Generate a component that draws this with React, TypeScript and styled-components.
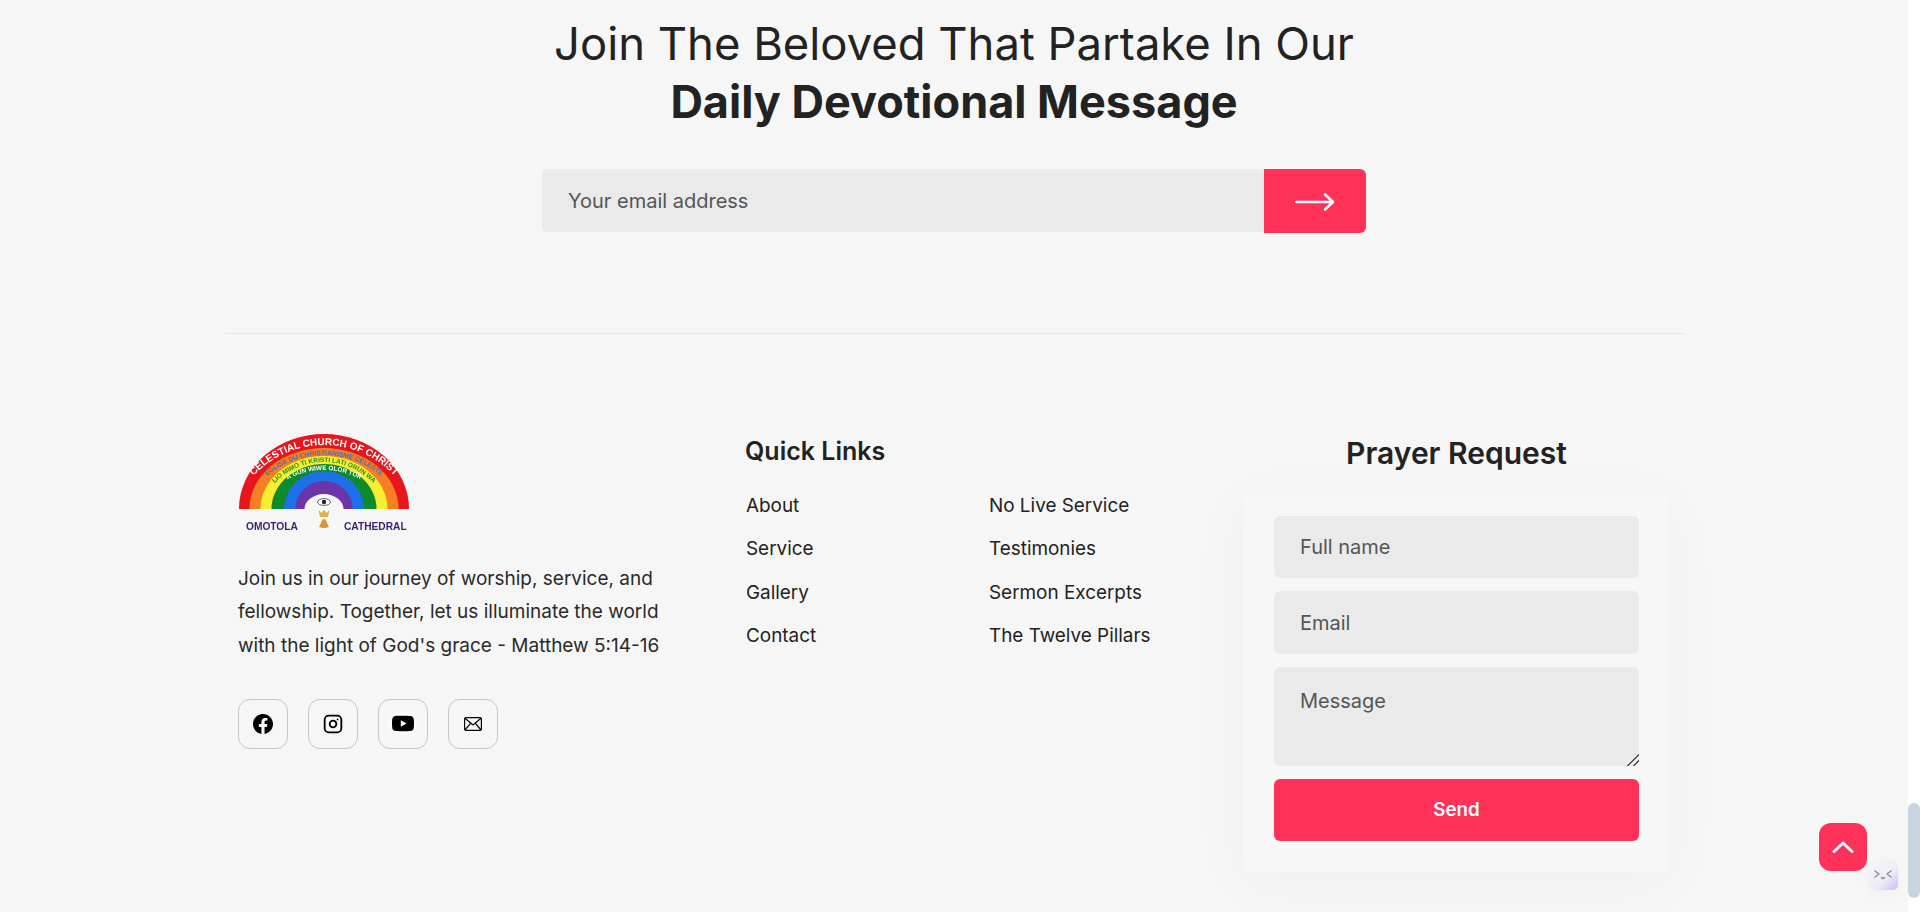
import React from 'react';
import styled, { createGlobalStyle } from 'styled-components';
import { BsFacebook, BsYoutube } from 'react-icons/bs';
import { Instagram } from 'lucide-react';

const GlobalStyle = createGlobalStyle`
    html, body {
        margin: 0;
        padding: 0;
        height: 912px;
        overflow: hidden;
        background: #f6f6f6;
    }
    * {
        box-sizing: border-box;
    }
`;

const Screen = styled.div`
    display: flex;
    width: 1920px;
    height: 912px;
    font-family: Inter, "Liberation Sans", sans-serif;
    color: #222;
`;

const Page = styled.main`
    width: 1908px;
    height: 912px;
    padding-top: 15px;
    background: #f6f6f6;
    overflow: hidden;
`;

const Rail = styled.div`
    width: 12px;
    height: 912px;
    padding: 803px 0 14px;
    background: #fff;
`;

const Thumb = styled.div`
    height: 95px;
    border-radius: 6px;
    background: #c8d4df;
`;

const Heading = styled.h2`
    margin: 0;
    font-size: 45.4px;
    line-height: 58px;
    font-weight: 400;
    text-align: center;
    letter-spacing: 0;

    strong {
        display: block;
        font-size: 45px;
        font-weight: 700;
    }
`;

const SubscribeForm = styled.form`
    display: flex;
    width: 824px;
    height: 64px;
    margin: 38px auto 0;
`;

const TextField = styled.input`
    display: block;
    width: 100%;
    height: 63px;
    padding: 0 26px;
    border: none;
    border-radius: 6px;
    background: #eaeaea;
    font-family: inherit;
    font-size: 20px;
    outline: none;

    &::placeholder {
        color: #555;
        opacity: 1;
    }
`;

const SubscribeField = styled(TextField)`
    flex: 1;
    border-radius: 6px 0 0 6px;
`;

const ArrowButton = styled.button`
    display: flex;
    align-items: center;
    justify-content: center;
    width: 102px;
    height: 64px;
    border: none;
    border-radius: 0 6px 6px 0;
    background: #ff3159;
    padding: 1px 0 0;
`;

const Footer = styled.footer`
    width: 1460px;
    margin: 100px 0 0 225px;
    border-top: 1px solid #e6e6e6;
    padding: 98px 17px 0 13px;
    display: grid;
    grid-template-columns: 508px 497px 1fr;
`;

const AboutColumn = styled.section`
    display: flex;
    flex-direction: column;
`;

const AboutText = styled.p`
    margin: 30px 0 0;
    font-size: 19px;
    line-height: 33.3px;
    font-weight: 400;
    color: #2a2a2a;
`;

const Socials = styled.div`
    display: flex;
    gap: 20px;
    margin-top: 37px;
`;

const SocialLink = styled.a<{ $halo?: boolean }>`
    display: flex;
    align-items: center;
    justify-content: center;
    width: 50px;
    height: 50px;
    border: 1px solid #c6c6c6;
    border-radius: 12px;
    color: #000;

    svg {
        filter: ${(p) => (p.$halo ? 'drop-shadow(0 0 3px #fff) drop-shadow(0 0 3px #fff)' : 'none')};
    }
`;

const LinksColumn = styled.section`
    display: flex;
    flex-direction: column;
`;

const ColumnTitle = styled.h4`
    margin: 0;
    margin-left: -1px;
    font-size: 25px;
    line-height: 38px;
    font-weight: 600;
`;

const LinkGrid = styled.div`
    display: grid;
    grid-template-columns: 243px 1fr;
    margin-top: 24px;
`;

const LinkList = styled.ul`
    display: flex;
    flex-direction: column;
    gap: 19.4px;
    margin: 0;
    padding: 0;
    list-style: none;
`;

const LinkItem = styled.li`
    font-size: 18.9px;
    line-height: 24px;
    font-weight: 400;
    color: #222;
`;

const PrayerColumn = styled.section`
    display: flex;
    flex-direction: column;
`;

const PrayerTitle = styled.h3`
    margin: 0;
    padding-left: 2px;
    font-size: 30px;
    line-height: 42px;
    font-weight: 600;
    text-align: center;
`;

const PrayerCard = styled.form`
    display: flex;
    flex-direction: column;
    gap: 13px;
    margin-top: 21px;
    padding: 21px 29px 31px 31px;
    height: 377px;
    background: #f7f7f7;
    box-shadow: 0 10px 60px rgba(0, 0, 0, 0.03);
`;

const MessageField = styled.textarea`
    display: block;
    width: 100%;
    height: 99px;
    padding: 22px 26px;
    border: none;
    border-radius: 6px;
    background: #eaeaea;
    font-family: inherit;
    font-size: 20px;
    line-height: 24px;
    outline: none;

    &::placeholder {
        color: #555;
        opacity: 1;
    }

    &::-webkit-resizer {
        background: linear-gradient(135deg, transparent 0 58%, #555 58% 64%, transparent 64% 78%, #555 78% 84%, transparent 84%);
    }
`;

const SendButton = styled.button`
    height: 63px;
    border: none;
    border-radius: 6px;
    background: #ff3159;
    color: #fff;
    font-family: inherit;
    font-size: 18.7px;
    font-weight: 600;
`;

const ScrollTop = styled.button`
    position: fixed;
    left: 1819px;
    top: 823px;
    display: flex;
    align-items: center;
    justify-content: center;
    width: 48px;
    height: 48px;
    padding: 0;
    border: none;
    border-radius: 12px;
    background: #ff3159;
`;

const Widget = styled.div`
    position: fixed;
    left: 1868px;
    top: 860px;
    display: flex;
    align-items: center;
    justify-content: center;
    width: 30px;
    height: 30px;
    border-radius: 5px;
    background: linear-gradient(135deg, #f6f6f8 0%, #efecf6 60%, #cdbcf0 100%);
    box-shadow: 0 6px 12px rgba(0, 0, 0, 0.02);
`;

// Bands are wider at the foot than at the crown, so each has its own ellipse
const BANDS = [
    { rx: 85, ry: 75, fill: '#e8141c' },
    { rx: 74.6, ry: 61, fill: '#f58020' },
    { rx: 63.5, ry: 53, fill: '#f5ee30' },
    { rx: 52.5, ry: 45, fill: '#0c8a2a' },
    { rx: 40, ry: 38, fill: '#1f6fe8' },
    { rx: 28.7, ry: 28, fill: '#6a35a8' },
    { rx: 19.5, ry: 15, fill: '#f6f6f6' },
];

// Lettering on the logo is flatter than the bands: each line rides its own circle
const CAPTIONS = [
    { id: 'cap-a', r: 96, drop: 32, reach: 84, size: 10, fill: '#fff', text: 'CELESTIAL CHURCH OF CHRIST' },
    { id: 'cap-b', r: 89, drop: 35, reach: 72, size: 6.7, fill: '#4a6ac0', text: 'EGLISE DU CHRISTIANISME CELESTE' },
    { id: 'cap-c', r: 68, drop: 21, reach: 62, size: 6.5, fill: '#2f8a20', text: 'LIO MIMO TI KRISTI LATI ORUN WA' },
    { id: 'cap-d', r: 75, drop: 36, reach: 50, size: 6.4, fill: '#fff', text: 'A GUN WIWE OLOR TOR' },
];

function captionArc(r: number, drop: number, reach: number) {
    const y = drop - Math.sqrt(r * r - reach * reach);
    return `M ${-reach} ${y} A ${r} ${r} 0 0 1 ${reach} ${y}`;
}

function Logo() {
    return (
        <svg width="172" height="100" viewBox="0 0 172 100" style={{ display: 'block', marginLeft: 1 }}>
            <defs>
                {CAPTIONS.map((c) => (
                    <path key={c.id} id={c.id} d={captionArc(c.r, c.drop, c.reach)} />
                ))}
                <filter id="soft"><feGaussianBlur stdDeviation="0.3" /></filter>
            </defs>
            <g filter="url(#soft)">
                <g transform="translate(85 77)">
                    {BANDS.map((b) => (
                        <path key={b.rx} d={`M ${-b.rx} 0 A ${b.rx} ${b.ry} 0 0 1 ${b.rx} 0 Z`} fill={b.fill} />
                    ))}
                </g>
                <g transform="translate(85 77)" fontFamily="'Liberation Sans', sans-serif" fontWeight="700" textAnchor="middle">
                    {CAPTIONS.map((c) => (
                        <text key={c.id} fontSize={c.size} fill={c.fill}>
                            <textPath href={`#${c.id}`} startOffset="50%">{c.text}</textPath>
                        </text>
                    ))}
                </g>
                <ellipse cx="85" cy="70" rx="6.5" ry="3.4" fill="#fff" stroke="#222" strokeWidth="0.7" />
                <circle cx="85" cy="70" r="2.2" fill="#222" />
                <path d="M79.5 78 L81 85 H89 L90.5 78 L87.5 81 L85 77.5 L82.5 81 Z" fill="#d9b54a" />
                <path d="M80 95 Q85 97 90 95 L88 91 Q87 87 85 87 Q83 87 82 91 Z" fill="#d9963a" />
                <g fontFamily="'Liberation Sans', sans-serif" fontWeight="700" fontSize="10.2" fill="#3a1f78">
                    <text x="7" y="98">OMOTOLA</text>
                    <text x="105" y="98">CATHEDRAL</text>
                </g>
            </g>
        </svg>
    );
}

function MailIcon() {
    return (
        <svg width="18" height="14" viewBox="0 0 18 14" fill="none" stroke="#000" strokeWidth="1.2">
            <rect x="0.6" y="0.6" width="16.8" height="12.8" rx="1.5" />
            <path d="M1 1.2 L9 8 L17 1.2 M1 13 L6.8 6.2 M17 13 L11.2 6.2" />
        </svg>
    );
}

export default function App() {
    return (
        <>
            <GlobalStyle />
            <Screen>
                <Page>
                    <Heading>
                        Join The Beloved That Partake In Our
                        <strong>Daily Devotional Message</strong>
                    </Heading>
                    <SubscribeForm>
                        <SubscribeField placeholder="Your email address" />
                        <ArrowButton type="button" aria-label="Subscribe">
                            <svg width="40" height="20" viewBox="0 0 40 20" fill="none" stroke="#fff" strokeWidth="2.6" strokeLinecap="round" strokeLinejoin="round">
                                <path d="M1.5 10 H38 M30 2.5 L38 10 L30 17.5" />
                            </svg>
                        </ArrowButton>
                    </SubscribeForm>

                    <Footer>
                        <AboutColumn>
                            <Logo />
                            <AboutText>
                                Join us in our journey of worship, service, and
                                <br />
                                fellowship. Together, let us illuminate the world
                                <br />
                                with the light of God's grace - Matthew 5:14-16
                            </AboutText>
                            <Socials>
                                <SocialLink href="#" aria-label="Facebook"><BsFacebook size={20} /></SocialLink>
                                <SocialLink href="#" aria-label="Instagram"><Instagram size={20} strokeWidth={2.2} /></SocialLink>
                                <SocialLink href="#" aria-label="YouTube" $halo><BsYoutube size={22} /></SocialLink>
                                <SocialLink href="#" aria-label="Email"><MailIcon /></SocialLink>
                            </Socials>
                        </AboutColumn>

                        <LinksColumn>
                            <ColumnTitle>Quick Links</ColumnTitle>
                            <LinkGrid>
                                <LinkList>
                                    <LinkItem>About</LinkItem>
                                    <LinkItem>Service</LinkItem>
                                    <LinkItem>Gallery</LinkItem>
                                    <LinkItem>Contact</LinkItem>
                                </LinkList>
                                <LinkList>
                                    <LinkItem>No Live Service</LinkItem>
                                    <LinkItem>Testimonies</LinkItem>
                                    <LinkItem>Sermon Excerpts</LinkItem>
                                    <LinkItem>The Twelve Pillars</LinkItem>
                                </LinkList>
                            </LinkGrid>
                        </LinksColumn>

                        <PrayerColumn>
                            <PrayerTitle>Prayer Request</PrayerTitle>
                            <PrayerCard>
                                <TextField placeholder="Full name" />
                                <TextField placeholder="Email" />
                                <MessageField placeholder="Message" />
                                <SendButton type="button">Send</SendButton>
                            </PrayerCard>
                        </PrayerColumn>
                    </Footer>
                </Page>
                <Rail>
                    <Thumb />
                </Rail>
            </Screen>

            <ScrollTop type="button" aria-label="Back to top">
                <svg width="22" height="12" viewBox="0 0 22 12" fill="none" stroke="#fff" strokeWidth="3" strokeLinecap="round" strokeLinejoin="round">
                    <path d="M2 10.5 L11 2 L20 10.5" />
                </svg>
            </ScrollTop>
            <Widget>
                <svg width="20" height="12" viewBox="0 0 20 12" fill="none" stroke="#8a8f96" strokeWidth="1.5" strokeLinecap="round" strokeLinejoin="round">
                    <path d="M2 2 L6 5 L2 8 M18 2 L14 5 L18 8 M8.5 8.5 Q10 10.5 11.5 8.5" />
                </svg>
            </Widget>
        </>
    );
}
